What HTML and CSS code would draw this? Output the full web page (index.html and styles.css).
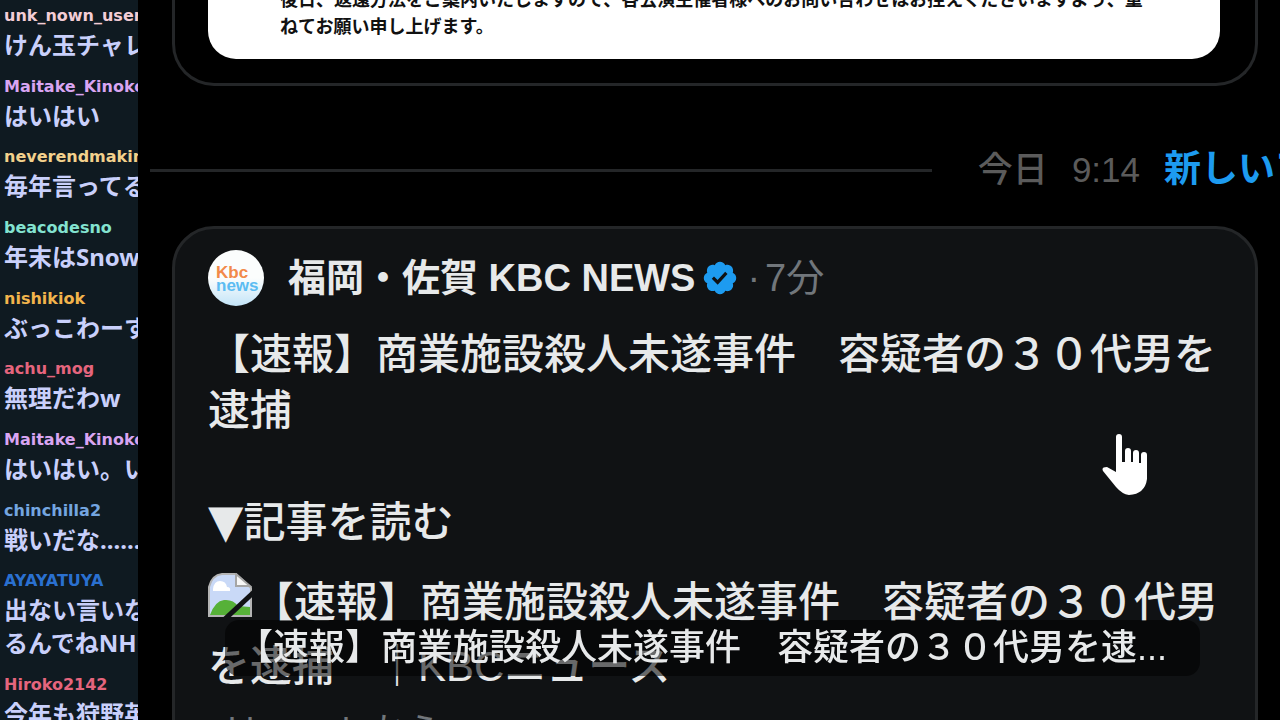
FILE: index.html
```html
<!DOCTYPE html>
<html lang="ja">
<head>
    <meta charset="UTF-8">
    <meta name="viewport" content="width=device-width, initial-scale=1.0">
    <title>福岡・佐賀 KBC NEWS</title>
    <link rel="stylesheet" href="styles.css">
</head>
<body>

<aside class="chat">
    <ul class="chat-list">
        <li><span class="user pink">unk_nown_user</span><p>けん玉チャレ</p></li>
        <li><span class="user purple">Maitake_Kinoko</span><p>はいはい</p></li>
        <li><span class="user yellow">neverendmaking</span><p>毎年言ってる</p></li>
        <li><span class="user mint">beacodesno</span><p>年末はSnow</p></li>
        <li><span class="user orange">nishikiok</span><p>ぶっこわーす</p></li>
        <li><span class="user red">achu_mog</span><p>無理だわw</p></li>
        <li><span class="user purple">Maitake_Kinoko</span><p>はいはい。い</p></li>
        <li><span class="user sky">chinchilla2</span><p>戦いだな......</p></li>
        <li><span class="user blue">AYAYATUYA</span><p>出ない言いな<br>るんでねNH</p></li>
        <li><span class="user red">Hiroko2142</span><p>今年も狩野英</p></li>
    </ul>
</aside>

<main class="timeline">
    <article class="card card-top">
        <div class="document">
            <p>後日、返還方法をご案内いたしますので、各公演主催者様へのお問い合わせはお控えくださいますよう、重<br>ねてお願い申し上げます。</p>
        </div>
    </article>

    <div class="divider">
        <span class="line"></span>
        <div class="divider-text">
            <span>今日</span>
            <time>9:14</time>
            <strong>新しいア</strong>
        </div>
    </div>

    <article class="card card-news">
        <header class="author">
            <svg class="avatar" viewBox="0 0 56 56" role="img" aria-label="Kbc news">
                <defs>
                    <linearGradient id="sky" x1="0" y1="0" x2="0" y2="1">
                        <stop offset="0.5" stop-color="#fbfdfd"/>
                        <stop offset="1" stop-color="#c3e4f8"/>
                    </linearGradient>
                </defs>
                <circle cx="28" cy="28" r="28" fill="url(#sky)"/>
                <text class="logo-kbc" x="8" y="28">Kbc</text>
                <text class="logo-news" x="8" y="41">news</text>
            </svg>
            <span class="name">福岡・佐賀 KBC NEWS</span>
            <svg class="verified" viewBox="0 0 22 22" aria-hidden="true">
                <path fill="#1d9bf0" d="M20.396 11c-.018-.646-.215-1.275-.57-1.816-.354-.54-.852-.972-1.438-1.246.223-.607.27-1.264.14-1.897-.131-.634-.437-1.218-.882-1.687-.47-.445-1.053-.75-1.687-.882-.633-.13-1.29-.083-1.897.14-.273-.587-.704-1.086-1.245-1.44S11.647 1.62 11 1.604c-.646.017-1.273.213-1.813.568s-.969.854-1.24 1.44c-.608-.223-1.267-.272-1.902-.14-.635.13-1.22.436-1.69.882-.445.47-.749 1.055-.878 1.688-.13.633-.08 1.29.144 1.896-.587.274-1.087.705-1.443 1.245-.356.54-.555 1.17-.574 1.817.02.647.218 1.276.574 1.817.356.54.856.972 1.443 1.245-.224.606-.274 1.263-.144 1.896.13.634.433 1.218.877 1.688.47.443 1.054.747 1.687.878.633.132 1.29.084 1.897-.136.274.586.705 1.084 1.246 1.439.54.354 1.17.551 1.816.569.647-.016 1.276-.213 1.817-.567s.972-.854 1.245-1.44c.604.239 1.266.296 1.903.164.636-.132 1.22-.447 1.68-.907.46-.46.776-1.044.908-1.681s.075-1.299-.165-1.903c.586-.274 1.084-.705 1.439-1.246.354-.54.551-1.17.569-1.816z"/>
                <path fill="#101214" d="M9.662 14.85l-3.429-3.428 1.293-1.302 2.072 2.072 4.4-4.794 1.347 1.246z"/>
            </svg>
            <span class="time"><span>·</span><time>7分</time></span>
        </header>
        <p class="body-text">【速報】商業施設殺人未遂事件　容疑者の３０代男を逮捕<br><br><span class="triangle">▼</span>記事を読む</p>
        <a class="news-link" href="#"><svg class="broken-image" viewBox="0 0 44 44" aria-hidden="true">
            <path fill="#c9d9f7" stroke="#b4b4b4" stroke-width="2" d="M1 43V14Q4 2 14 1H28L43 15V43Z"/>
            <path fill="#fff" d="M5 16q1-8 7-8 6 0 7 6 4 0 3 4H5z"/>
            <path fill="#56b138" d="M2 42q5-14 14-15 9-1 14 6l12 1v8z"/>
            <path fill="#f7f7f7" stroke="#a5a5a5" stroke-width="2" d="M28 1V13H42Z"/>
            <path stroke="#101214" stroke-width="5" d="M17 46 46 19"/>
        </svg>【速報】商業施設殺人未遂事件　容疑者の３０代男を逮捕　｜KBCニュース</a>
        <p class="source">kbc.co.jpから</p>
    </article>
</main>

<div class="tooltip" role="tooltip">【速報】商業施設殺人未遂事件　容疑者の３０代男を逮...</div>

<svg class="pointer" viewBox="0 0 46 62" aria-hidden="true">
    <path fill="#fff" d="M14 3Q14 0 17 0Q20 0 20 3V28H23V17Q23 14 26 14Q29 14 29 17V28H31V19Q31 16 34 16Q37 16 37 19V29H39V21Q39 18 42 18Q45 18 45 21V45Q43 60 27 61Q20 60 14 53L1 37Q-1 33 5 33L14 38Z"/>
</svg>

</body>
</html>
```
FILE: styles.css
```css
* {
    box-sizing: border-box;
}
body {
    margin: 0;
    height: 100vh;
    display: flex;
    overflow: hidden;
    background-color: #000;
    color: #e7e9ea;
    font-family: "Liberation Sans", "Noto Sans CJK JP", sans-serif;
}
p {
    margin: 0;
}

/* chat */
.chat {
    flex: 0 0 138px;
    overflow: hidden;
    background-color: #0f1a21;
    font-family: "DejaVu Sans", "Noto Sans CJK JP", sans-serif;
    font-weight: bold;
    white-space: nowrap;
}
.chat-list {
    list-style: none;
    margin: 0;
    padding: 4px 0 0 4px;
    height: calc(100vh + 10px);
    display: flex;
    flex-direction: column;
    justify-content: space-between;
}
.chat-list p {
    font-family: "Noto Sans", "Noto Sans CJK JP", sans-serif;
    font-size: 24px;
    line-height: 33px;
    color: #c9d0fb;
}
.user {
    display: block;
    font-size: 16px;
    line-height: 24px;
}
.pink { color: #f3cdd6; }
.purple { color: #d9a5f2; }
.yellow { color: #f3d18c; }
.mint { color: #83e3d0; }
.orange { color: #f2b44c; }
.red { color: #e5657d; }
.sky { color: #74a6e0; }
.blue { color: #2a70d0; }

/* timeline */
.timeline {
    flex: 1;
    min-width: 0;
    overflow: hidden;
}
.card {
    margin: 0 22px 0 34px;
    padding: 24px 35px 24px 33px;
    border: 3px solid #242628;
}
.card-top {
    padding-top: 0;
    border-top: none;
    border-radius: 0 0 42px 42px;
}
.document {
    overflow: hidden;
    padding: 0 72px 18px;
    border-radius: 0 0 28px 28px;
    background-color: #fff;
    color: #111;
    font-size: 18px;
    font-weight: bold;
    line-height: 27px;
    white-space: nowrap;
}
.document p {
    margin-top: -13px;
}
.divider {
    display: flex;
    align-items: center;
    gap: 46px;
    margin: 56px -32px 28px 12px;
    line-height: 56px;
}
.line {
    flex: 1;
    height: 3px;
    background-color: #242628;
}
.divider-text {
    display: flex;
    gap: 24px;
    font-size: 35px;
    font-weight: 500;
    color: #5b5b5b;
    white-space: nowrap;
}
.divider-text strong {
    font-size: 37px;
    color: #1d9bf0;
}
.card-news {
    padding-top: 21px;
    border-radius: 42px 42px 0 0;
    background-color: #101214;
}
.author {
    display: flex;
    align-items: center;
    line-height: 56px;
    white-space: nowrap;
}
.avatar {
    width: 56px;
    height: 56px;
    margin-right: 24px;
}
.logo-kbc,
.logo-news {
    font-size: 17px;
    font-weight: bold;
}
.logo-kbc {
    fill: #f28a4a;
}
.logo-news {
    fill: #5cbcf2;
}
.name {
    font-size: 38px;
    font-weight: bold;
}
.verified {
    width: 38px;
    height: 38px;
    margin: 0 8px 0 6px;
}
.time {
    display: flex;
    gap: 5px;
    font-size: 38px;
    color: #71767b;
}
.body-text {
    margin-top: 21px;
    font-size: 42px;
    font-weight: 500;
    line-height: 56px;
}
.triangle {
    font-family: "DejaVu Sans", sans-serif;
    font-size: 46px;
    line-height: 1;
}
.news-link {
    display: block;
    margin-top: 20px;
    font-size: 42px;
    font-weight: 500;
    line-height: 64px;
    color: inherit;
    text-decoration: none;
}
.broken-image {
    width: 44px;
    height: 44px;
    vertical-align: baseline;
}
.source {
    margin-top: 5px;
    padding-left: 20px;
    font-size: 36px;
    line-height: 56px;
    color: #71767b;
}

/* overlays */
.tooltip {
    position: fixed;
    left: 225px;
    right: 80px;
    bottom: 44px;
    padding: 0 12px;
    border-radius: 14px;
    background-color: rgba(0, 0, 0, 0.55);
    font-size: 36px;
    font-weight: 500;
    line-height: 56px;
    white-space: nowrap;
}
.pointer {
    position: fixed;
    left: 1102px;
    top: 434px;
    width: 46px;
    height: 62px;
}
```
